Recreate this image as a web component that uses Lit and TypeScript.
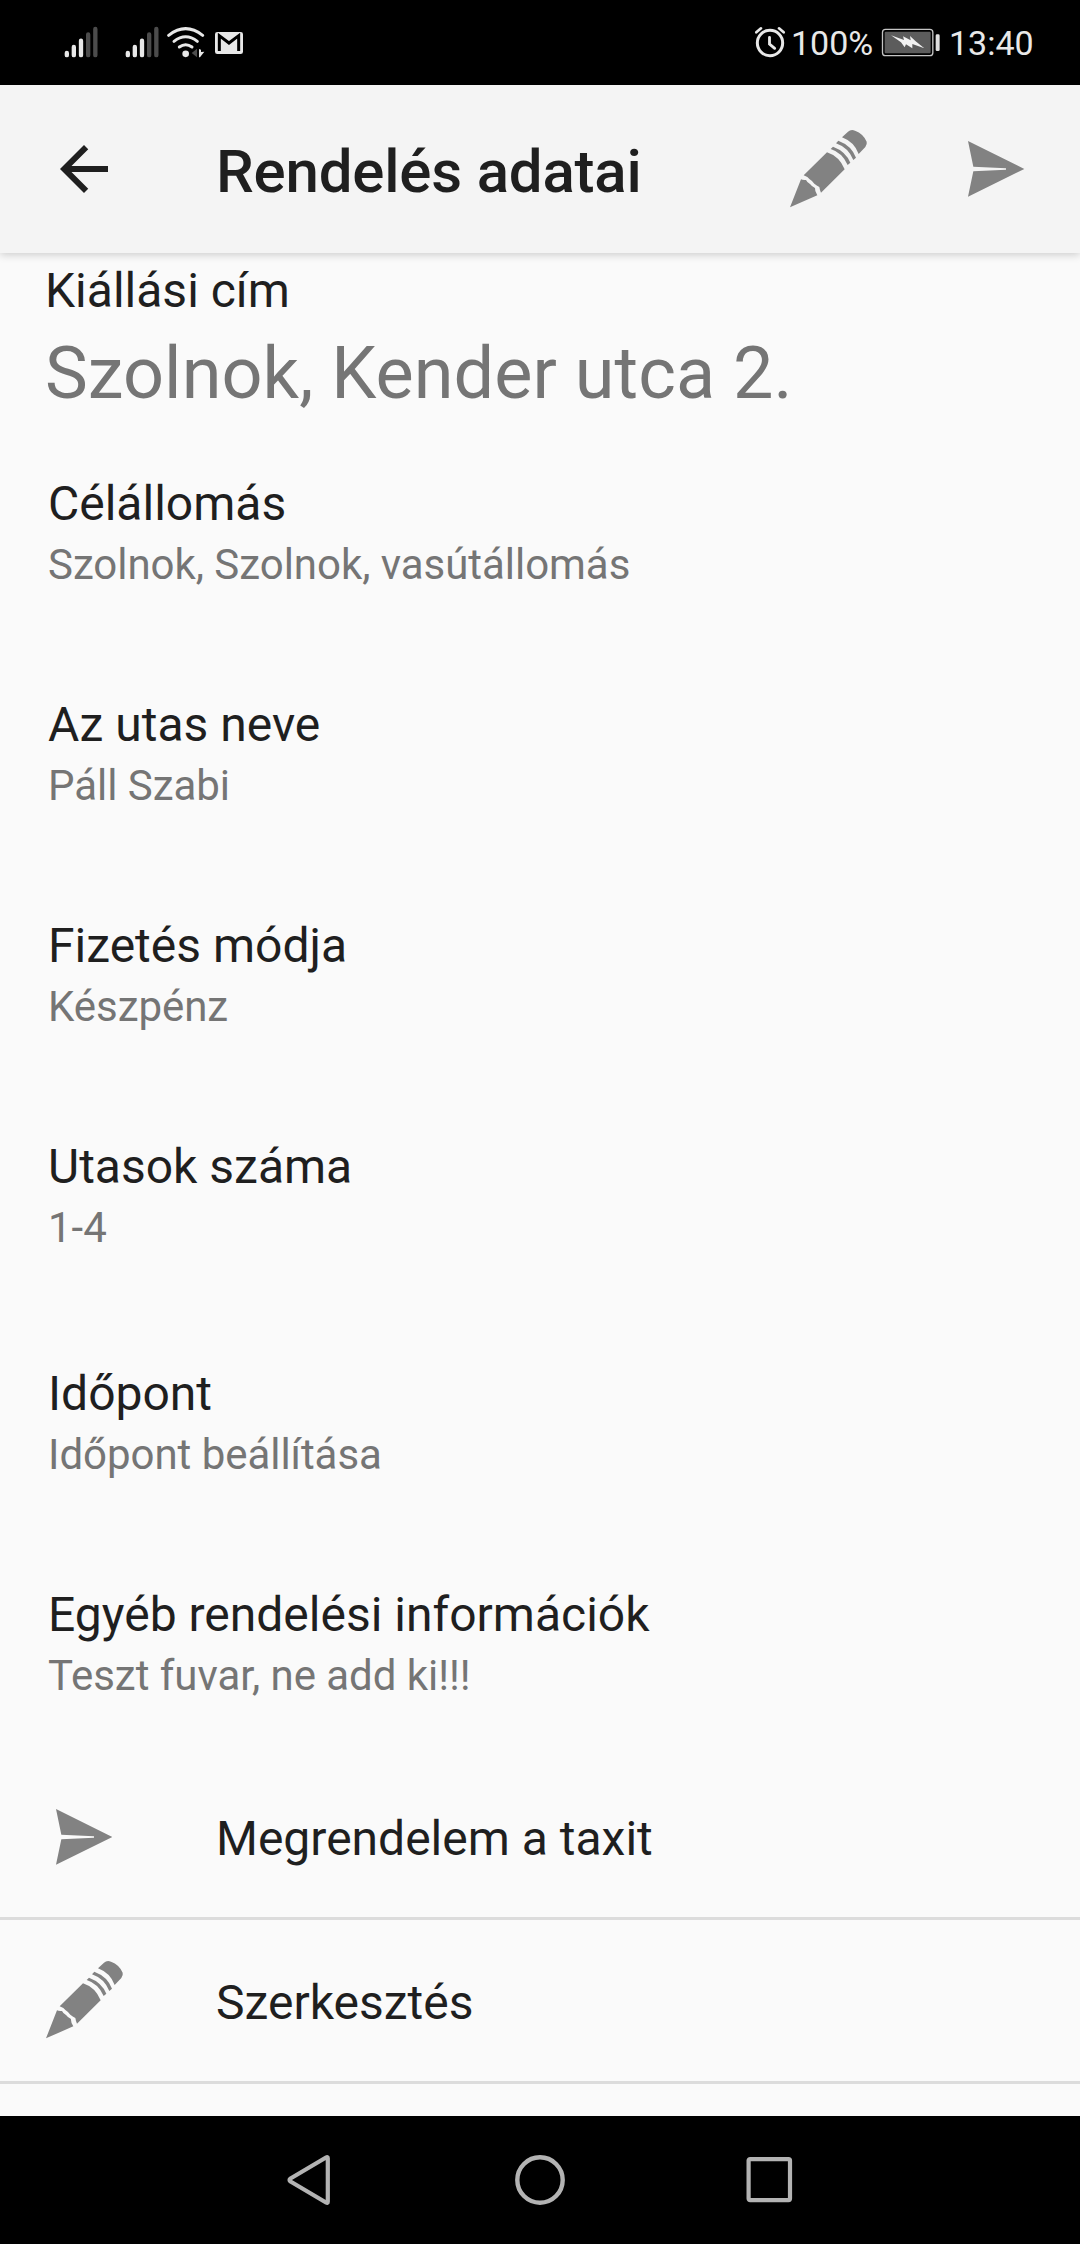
import { LitElement, html, svg, css } from "lit";
import { customElement, property } from "lit/decorators.js";

const signalBars = svg`
  <g stroke-width="13" stroke-linecap="round" fill="none">
    <path stroke="#e8e8e8" d="M80.5 159V165.500M101.500 141V165.500M123 122V165.500"/>
    <path stroke="#4c4c4c" d="M144.500 103.500V165.500M166 87V165.500"/>
  </g>`;

const glyphs: Record<string, { box: string; body: unknown }> = {
  signal: { box: "72 78 105 96", body: signalBars },
  wifi: {
    box: "378 78 117 96",
    body: svg`
      <g fill="none" stroke="#e8e8e8" stroke-width="9" stroke-linecap="round">
        <path d="M386 106Q437 66 488 106"/>
        <path d="M402 124Q437 97 472 124"/>
        <path d="M418 141Q437 127 456 141"/>
      </g>
      <circle cx="437" cy="161.500" r="10" fill="#e8e8e8"/>
      <path fill="#4c4c4c" d="M455 159L471 146V172Z"/>
      <path fill="#e8e8e8" d="M477 147L483 149V156L493 155L480 172H477Z"/>`,
  },
  mail: {
    box: "522 78 90 96",
    body: svg`
      <rect x="525" y="96" width="84" height="66" rx="7" fill="#e8e8e8"/>
      <path d="M538 153V107L567 129L596 107V153" fill="none" stroke="#000" stroke-width="9"/>`,
  },
  alarm: {
    box: "42 78 96 96",
    body: svg`
      <g fill="none" stroke="#e8e8e8" stroke-linecap="round">
        <circle cx="90" cy="129" r="38" stroke-width="9"/>
        <path stroke-width="8.500" d="M88.500 112V132L104 145"/>
        <path stroke-width="8" d="M49 97L63 85M117 85L131 97"/>
      </g>`,
  },
  battery: {
    box: "423 78 180 96",
    body: svg`
      <rect x="427.500" y="88" width="151" height="79" rx="9" fill="#000" stroke="#c4c4c4" stroke-width="4"/>
      <rect x="434" y="95" width="138" height="65" rx="3" fill="#5c5c5c"/>
      <path fill="#f2f2f2" d="M453 106L492 120L489 109L512 121L510 108L527 124L553 145L517 132L517 145L498 133L494 142L483 127Z"/>
      <rect x="587" y="103" width="12" height="50" rx="4" fill="#e0e0e0"/>`,
  },
  back: {
    box: "0 0 24 24",
    body: svg`<path fill="#1f1f1f" d="M20 11H7.830l5.590-5.590L12 4l-8 8 8 8 1.410-1.410L7.830 13H20v-2z"/>`,
  },
  pencil: {
    box: "84 54 240 240",
    body: svg`
      <g fill="#828282">
        <path d="M90 292L123 208Q128 211 138 210Q141 217 150 222Q156 230 165 234Q164 244 172 256Z"/>
        <path d="M131 196L201 127Q238 139 254 178L183 248Q180 243 178 231Q170 226 163 221Q156 212 149 208Q144 200 131 196Z"/>
        <path d="M212 117L219 110Q257 124 271 158L263 165Q247 128 212 117Z"/>
        <path d="M228 100L235 92Q275 107 288 143L280 150Q265 113 228 100Z"/>
        <path d="M246 82L264 65Q273 57 285 62Q310 71 320 95Q322 103 316 111L296 132Q283 96 246 82Z"/>
      </g>`,
  },
  send: {
    box: "618 87 180 180",
    body: svg`<path fill="#828282" d="M624 93L793 177L624 260L640 184L738 179V175L640 170Z"/>`,
  },
  navBack: {
    box: "0 0 50 50",
    body: svg`<path d="M42.800 3.200Q42.800 1.500 41 2.500L5.500 23.500Q3.500 25 5.500 26.500L41 47.500Q42.800 48.500 42.800 46.800Z" fill="none" stroke="#b3b3b3" stroke-width="4.200" stroke-linejoin="round"/>`,
  },
  navHome: {
    box: "0 0 50 50",
    body: svg`<circle cx="25" cy="25" r="22.700" fill="none" stroke="#b3b3b3" stroke-width="4.400"/>`,
  },
  navRecent: {
    box: "0 0 50 50",
    body: svg`<rect x="3.600" y="4.100" width="41.400" height="41" rx="1.500" fill="none" stroke="#b3b3b3" stroke-width="4.200"/>`,
  },
};

@customElement("ui-glyph")
export class UiGlyph extends LitElement {
  @property() name = "";
  static styles = css`
    :host { display: block; flex: none; }
    .art { display: block; width: 100%; height: 100%; }
  `;
  render() {
    const g = glyphs[this.name];
    return html`<svg class="art" viewBox=${g.box} aria-hidden="true">${g.body}</svg>`;
  }
}

@customElement("status-bar")
export class StatusBar extends LitElement {
  static styles = css`
    :host {
      display: flex; justify-content: space-between; flex: none; box-sizing: border-box;
      height: 85px; padding: 26px 0 0 64px; background: #000; color: #e8e8e8;
    }
    .group { display: flex; height: 32px; }
    .signal { width: 35px; height: 32px; margin-right: 26px; }
    .signal.second { margin-right: 6px; }
    .wifi { width: 39px; height: 32px; margin-right: 9px; }
    .mail { width: 30px; height: 32px; }
    .alarm { width: 32px; height: 32px; }
    .battery { width: 60px; height: 32px; }
    .text { font-size: 34px; line-height: 34px; white-space: nowrap; }
    .percent { width: 90px; margin-left: 5px; }
    .clock { width: 131px; margin-left: 8px; }
  `;
  render() {
    return html`
      <div class="group">
        <ui-glyph class="signal" name="signal"></ui-glyph>
        <ui-glyph class="signal second" name="signal"></ui-glyph>
        <ui-glyph class="wifi" name="wifi"></ui-glyph>
        <ui-glyph class="mail" name="mail"></ui-glyph>
      </div>
      <div class="group">
        <ui-glyph class="alarm" name="alarm"></ui-glyph>
        <div class="text percent">100%</div>
        <ui-glyph class="battery" name="battery"></ui-glyph>
        <div class="text clock">13:40</div>
      </div>`;
  }
}

@customElement("app-bar")
export class AppBar extends LitElement {
  static styles = css`
    :host {
      display: flex; align-items: center; flex: none; box-sizing: border-box;
      height: 168px; padding: 0 54px 0 48px; background: #f4f4f4;
      box-shadow: 0 2px 8px rgba(0, 0, 0, 0.18); z-index: 1;
    }
    .back { width: 72px; height: 72px; }
    .title {
      flex: 1; margin: 5px 0 0 96px; font-size: 60px; line-height: 70px; letter-spacing: -0.2px;
      font-weight: 500; color: #1f1f1f; white-space: nowrap;
    }
    .pencil { width: 80px; height: 80px; margin: 0 98px 2px 0; }
    .send { width: 60px; height: 60px; }
  `;
  render() {
    return html`
      <ui-glyph class="back" name="back"></ui-glyph>
      <div class="title">Rendelés adatai</div>
      <ui-glyph class="pencil" name="pencil"></ui-glyph>
      <ui-glyph class="send" name="send"></ui-glyph>`;
  }
}

const fields = [
  { label: "Célállomás", value: "Szolnok, Szolnok, vasútállomás" },
  { label: "Az utas neve", value: "Páll Szabi" },
  { label: "Fizetés módja", value: "Készpénz" },
  { label: "Utasok száma", value: "1-4" },
  { label: "Időpont", value: "Időpont beállítása", kind: "group" },
  { label: "Egyéb rendelési információk", value: "Teszt fuvar, ne add ki!!!", kind: "last" },
];

@customElement("app-root")
export class AppRoot extends LitElement {
  static styles = css`
    :host {
      display: flex; flex-direction: column; width: 1080px; height: 2244px; overflow: hidden;
      background: #fafafa; font-family: Roboto, "Liberation Sans", sans-serif;
    }
    .content { flex: 1; min-height: 0; overflow: hidden; }
    .pickup { height: 213px; box-sizing: border-box; padding: 10px 46px 0 45px; }
    .label { font-size: 48px; line-height: 56px; color: #1f1f1f; white-space: nowrap; }
    .address {
      margin-top: 13px; font-size: 72px; line-height: 84px; letter-spacing: 0.05px;
      color: #757575; white-space: nowrap;
    }
    .field { height: 221px; box-sizing: border-box; padding: 10px 48px 0; }
    .field.group { margin-top: 6px; }
    .field.last { height: 179px; }
    .value {
      margin-top: 8px; font-size: 42px; line-height: 50px; letter-spacing: -0.04px;
      color: #757575; white-space: nowrap;
    }
    .action {
      display: flex; align-items: center; box-sizing: border-box; height: 164px;
      border-bottom: 3px solid #dcdcdc;
    }
    .action .label { margin-top: 5px; }
    .slot { display: flex; width: 80px; margin: 0 92.500px 0 43.500px; }
    .slot.plane { box-sizing: border-box; padding-left: 10px; }
    .send { width: 60px; height: 60px; }
    .pencil { width: 80px; height: 80px; margin-bottom: 3px; }
    .nav {
      display: flex; flex: none; align-items: center; justify-content: center; gap: 180px;
      height: 128px; background: #000;
    }
    .key { width: 50px; height: 50px; }
  `;
  render() {
    return html`
      <status-bar></status-bar>
      <app-bar></app-bar>
      <main class="content">
        <section class="pickup">
          <div class="label">Kiállási cím</div>
          <div class="address">Szolnok, Kender utca 2.</div>
        </section>
        ${fields.map(
          (f) => html`<section class="field ${f.kind ?? ""}">
            <div class="label">${f.label}</div>
            <div class="value">${f.value}</div>
          </section>`
        )}
        <div class="action">
          <div class="slot plane"><ui-glyph class="send" name="send"></ui-glyph></div>
          <div class="label">Megrendelem a taxit</div>
        </div>
        <div class="action">
          <div class="slot"><ui-glyph class="pencil" name="pencil"></ui-glyph></div>
          <div class="label">Szerkesztés</div>
        </div>
      </main>
      <nav class="nav">
        <ui-glyph class="key" name="navBack"></ui-glyph>
        <ui-glyph class="key" name="navHome"></ui-glyph>
        <ui-glyph class="key" name="navRecent"></ui-glyph>
      </nav>`;
  }
}
